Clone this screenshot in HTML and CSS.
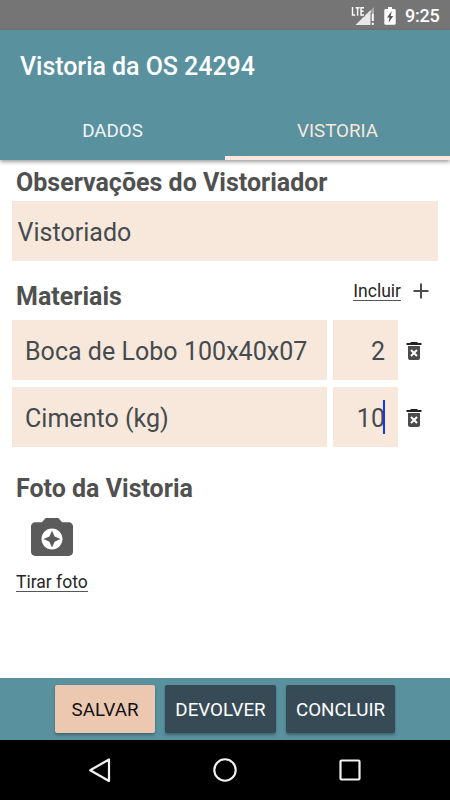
FILE: index.html
```html
<!DOCTYPE html>
<html lang="pt-BR">
<head>
<meta charset="utf-8">
<title>Vistoria da OS 24294</title>
<link rel="stylesheet" href="styles.css">
</head>
<body>
<div class="screen">
  <div class="status">
    <svg class="signal" width="26" height="22" viewBox="0 0 26 22">
      <path d="M23 1v6h-6z" fill="#a8a8a8"/>
      <path d="M19.500 4v15H4.500z" fill="#e8e8e8"/>
      <path d="M0 0h14v10.500H0z" fill="#757575"/>
      <path d="M1.500 1v8h2.700M4.600 1.700h4M6.600 1.700V9.700M13 1.700H10v7.300h3M10 5.300h2.600" fill="none" stroke="#fff" stroke-width="1.400"/>
      <path d="M20.800 7.500h2v7.500h-2zm0 9.200h2V19h-2z" fill="#fff"/>
    </svg>
    <svg class="battery" width="12" height="18" viewBox="0 0 12 18">
      <path d="M4 0h4v2h2.500q1.200 0 1.200 1.200v13.300q0 1.200-1.200 1.200h-9Q.3 17.700.3 16.500V3.200Q.3 2 1.500 2H4z" fill="#fff"/>
      <path d="M7.800 4L3 10.500h2.500L4.500 15.700 9.300 9H6.700z" fill="#555"/>
    </svg>
    <span class="clock">9:25</span>
  </div>
  <header class="appbar">
    <h1 class="title"><span>Vistoria da OS 24294</span></h1>
    <nav class="tabs">
      <div class="tab"><span>DADOS</span></div>
      <div class="tab active"><span>VISTORIA</span></div>
    </nav>
  </header>
  <main class="content">
    <h2 class="heading obs"><span>Observações do Vistoriador</span></h2>
    <div class="field note"><span>Vistoriado</span></div>
    <div class="section-row">
      <h2 class="heading"><span>Materiais</span></h2>
      <div class="add">
        <span class="link">Incluir</span>
        <svg width="16" height="16" viewBox="0 0 16 16"><path d="M8 .5v15M.5 8h15" stroke="#4d4d4d" stroke-width="2"/></svg>
      </div>
    </div>
    <div class="item">
      <div class="field name"><span>Boca de Lobo 100x40x07</span></div>
      <div class="field qty"><span>2</span></div>
      <svg class="trash" width="16" height="20" viewBox="0 0 16 20"><path d="M5 1h6l1 1h3.500v2H.5V2H4z" fill="#222"/><path d="M2 5h12v12q0 2-2 2H4q-2 0-2-2z" fill="#4c4c4c"/><path d="M5 9l6 6M11 9l-6 6" stroke="#fff" stroke-width="2"/></svg>
    </div>
    <div class="item">
      <div class="field name"><span>Cimento (kg)</span></div>
      <div class="field qty"><span>10</span><i class="caret"></i></div>
      <svg class="trash" width="16" height="20" viewBox="0 0 16 20"><path d="M5 1h6l1 1h3.500v2H.5V2H4z" fill="#222"/><path d="M2 5h12v12q0 2-2 2H4q-2 0-2-2z" fill="#4c4c4c"/><path d="M5 9l6 6M11 9l-6 6" stroke="#fff" stroke-width="2"/></svg>
    </div>
    <h2 class="heading photo"><span>Foto da Vistoria</span></h2>
    <svg class="camera" width="42" height="38" viewBox="2 3 20 18"><path fill="#5b5b5b" d="M9 3L7.170 5H4c-1.100 0-2 .9-2 2v12c0 1.100.9 2 2 2h16c1.100 0 2-.9 2-2V7c0-1.100-.9-2-2-2h-3.170L15 3H9zm3 15c-2.760 0-5-2.240-5-5s2.240-5 5-5 5 2.240 5 5-2.240 5-5 5z"/><path fill="#5b5b5b" d="M12 17l1.250-2.750L16 13l-2.750-1.250L12 9l-1.250 2.750L8 13l2.750 1.250z"/></svg>
    <div class="photo-action"><span class="link">Tirar foto</span></div>
  </main>
  <footer class="actions">
    <button class="btn save"><span>SALVAR</span></button>
    <button class="btn return"><span>DEVOLVER</span></button>
    <button class="btn finish"><span>CONCLUIR</span></button>
  </footer>
  <div class="navbar">
    <svg width="24" height="26" viewBox="0 0 24 26"><path d="M21 2.500v21.500L2.200 13.200z" fill="none" stroke="#f2f2f2" stroke-width="2.200" stroke-linejoin="round"/></svg>
    <svg width="24" height="24" viewBox="0 0 24 24"><circle cx="12" cy="12" r="10.700" fill="none" stroke="#f2f2f2" stroke-width="2.100"/></svg>
    <svg width="24" height="24" viewBox="0 0 24 24"><rect x="2.500" y="2.500" width="19" height="19" rx="1" fill="none" stroke="#f2f2f2" stroke-width="2.200"/></svg>
  </div>
</div>
</body>
</html>
```

FILE: styles.css
```css
* { box-sizing: border-box; }
body { margin: 0; font-family: Roboto, "Liberation Sans", sans-serif; background: #fff; }
.screen { width: 450px; height: 800px; display: flex; flex-direction: column; overflow: hidden; }
.status { height: 30px; background: #757575; display: flex; justify-content: flex-end; align-items: center; padding-right: 10px; flex: none; }
.signal { margin-right: 7px; margin-top: 3px; }
.battery { margin-right: 9px; margin-top: 1px; }
.clock { color: #fff; font-size: 18px; line-height: 30px; font-weight: 500; letter-spacing: -.2px; width: 35px; white-space: nowrap; padding-top: 2px; }
.appbar { height: 130px; background: #5a919f; flex: none; box-shadow: 0 2px 4px rgba(0, 0, 0, .38); }
.title { margin: 0; height: 71px; line-height: 74px; padding-left: 20px; color: #fff; font-size: 25px; font-weight: 500; letter-spacing: -.05px; white-space: nowrap; }
.tabs { display: flex; height: 59px; }
.tab { flex: 1; text-align: center; line-height: 60px; font-size: 18.75px; color: #f0f5f6; }
.tab.active { color: #f8e7da; border-bottom: 4px solid #f8e8dd; }
.content { height: 518px; padding: 0 12px; color: #444b4e; flex: none; }
.heading { margin: 0; padding-left: 4px; font-size: 25px; line-height: 30px; font-weight: 700; color: #505050; white-space: nowrap; }
.obs { padding-top: 8px; height: 41px; }
.field { background: #f8e8dc; height: 60px; line-height: 63px; font-size: 25px; letter-spacing: .03px; white-space: nowrap; }
.note { width: 426px; padding-left: 5.5px; }
.section-row { display: flex; justify-content: space-between; height: 59px; padding-top: 20px; }
.section-row .heading { padding-top: 1px; }
.add { display: flex; gap: 12px; padding-right: 9px; height: 20px; align-items: center; }
.add .link { line-height: 18px; }
.link { display: inline-block; font-size: 17.5px; line-height: 20px; color: #262626; border-bottom: 1px solid #555; white-space: nowrap; }
.item { display: flex; align-items: center; height: 60px; margin-bottom: 7px; }
.name { width: 315px; padding-left: 13px; margin-right: 6px; }
.qty { width: 65px; padding-right: 13px; text-align: right; position: relative; margin-right: 8px; }
.caret { position: absolute; right: 13px; top: 13px; width: 2px; height: 34px; background: #1236ff; }
.trash { margin-top: 2px; }
.photo { padding-top: 20px; height: 64px; }
.camera { display: block; margin: 0 0 16px 19px; }
.photo-action { padding-left: 4px; }
.photo-action .link { line-height: 18px; padding-top: 1px; }
.actions { height: 62px; background: #5a919f; display: flex; padding: 7px 0 0 55px; gap: 10px; flex: none; }
.btn { height: 48px; border: 0; border-radius: 2px; padding: 1px 0 0; font-family: inherit; font-size: 18.75px; color: #fff; background: #374b57; box-shadow: 0 2px 3px rgba(0, 0, 0, .3); white-space: nowrap; }
.save { width: 100px; background: #ecc8b1; color: #111; }
.return { width: 111px; }
.finish { width: 109px; }
.navbar { height: 60px; background: #000; display: flex; align-items: center; justify-content: center; gap: 101px; flex: none; }
```
